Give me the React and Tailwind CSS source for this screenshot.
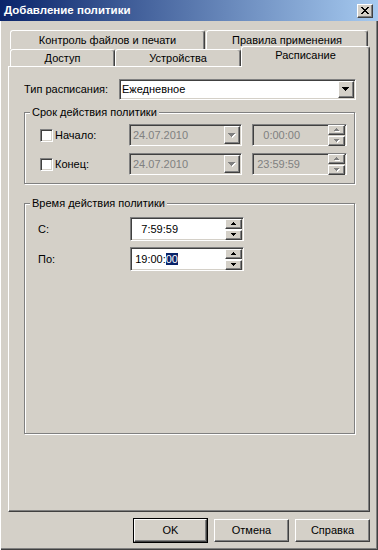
import React from "react";

const raised =
  "bg-[#d4d0c8] border border-t-white border-l-white border-r-[#404040] border-b-[#404040] shadow-[inset_-1px_-1px_0_#808080]";
const sunken =
  "border border-t-[#808080] border-l-[#808080] border-r-white border-b-white shadow-[inset_1px_1px_0_#404040,inset_-1px_-1px_0_#d4d0c8]";
const etched =
  "relative border border-[#808080] shadow-[1px_1px_0_#fff,inset_1px_1px_0_#fff]";

function ArrowDown({ disabled }) {
  const d = "M0 0h7v1H0zM1 1h5v1H1zM2 2h3v1H2zM3 3h1v1H3z";
  return (
    <svg width="8" height="5" viewBox="0 0 8 5" shapeRendering="crispEdges">
      {disabled && <path d={d} fill="#fff" transform="translate(1 1)" />}
      <path d={d} fill={disabled ? "#808080" : "#000"} />
    </svg>
  );
}

function SpinArrow({ up, disabled }) {
  const d = up ? "M2 0h1v1H2zM1 1h3v1H1zM0 2h5v1H0z" : "M0 0h5v1H0zM1 1h3v1H1zM2 2h1v1H2z";
  return (
    <svg width="6" height="4" viewBox="0 0 6 4" shapeRendering="crispEdges">
      {disabled && <path d={d} fill="#fff" transform="translate(1 1)" />}
      <path d={d} fill={disabled ? "#808080" : "#000"} />
    </svg>
  );
}

function Tab({ width, children, selected }) {
  return (
    <div
      className={`${width} ${
        selected ? "h-[21px] relative top-[1px] z-10 pb-[3px]" : "h-full"
      } flex items-center justify-center bg-[#d4d0c8] border-t border-l border-r border-t-white border-l-white border-r-[#404040] shadow-[inset_-1px_0_0_#808080] rounded-t-[3px]`}
    >
      {children}
    </div>
  );
}

function Spinner({ disabled, top }) {
  return (
    <div className={`flex flex-col gap-[1px] mr-[1px] ${top}`}>
      <div className={`${raised} w-[17px] h-[10px] flex items-center justify-center`}>
        <SpinArrow up disabled={disabled} />
      </div>
      <div className={`${raised} w-[17px] h-[10px] flex items-center justify-center`}>
        <SpinArrow disabled={disabled} />
      </div>
    </div>
  );
}

function DateRow({ label, date, time }) {
  return (
    <div className="flex items-center h-[22px]">
      <div className="w-[89px] flex items-center">
        <div className={`${sunken} w-[13px] h-[13px] bg-white`} />
        <span className="ml-[2px]">{label}</span>
      </div>
      <div
        className={`${sunken} w-[113px] h-[22px] bg-[#d4d0c8] flex items-center justify-between pl-[3px] text-[#808080]`}
      >
        <span>{date}</span>
        <div className={`${raised} w-[16px] h-[18px] mr-[1px] flex items-center justify-center`}>
          <ArrowDown disabled />
        </div>
      </div>
      <div
        className={`${sunken} ml-[10px] w-[95px] h-[22px] bg-[#d4d0c8] flex items-center justify-between text-[#808080]`}
      >
        <span className="w-[47px] text-right">{time}</span>
        <Spinner disabled top="" />
      </div>
    </div>
  );
}

function TimeRow({ label, children }) {
  return (
    <div className="flex items-center h-[24px]">
      <span className="w-[92px]">{label}</span>
      <div className={`${sunken} w-[114px] h-[24px] bg-white flex items-center justify-between`}>
        <span className="w-[47px] text-right">{children}</span>
        <Spinner top="self-start pt-[1px]" />
      </div>
    </div>
  );
}

export default function App() {
  return (
    <div className="w-[378px] h-[550px] bg-[#d4d0c8] flex flex-col overflow-hidden text-black text-[11px] leading-[13px] font-['Liberation_Sans',Arial,sans-serif] shadow-[inset_1px_0_0_#fff,inset_-1px_-1px_0_#404040,inset_-2px_-2px_0_#808080]">
      <div className="h-[21px] shrink-0 flex items-center justify-between pl-[4px] pr-[5px] bg-[linear-gradient(to_right,#0a246a,#a6caf0)]">
        <span className="text-white font-bold text-[11.5px]">Добавление политики</span>
        <div className={`${raised} w-[16px] h-[14px] flex items-center justify-center`}>
          <svg width="8" height="7" viewBox="0 0 8 7" shapeRendering="crispEdges">
            <path
              d="M0 0h2v1H0zM6 0h2v1H6zM1 1h2v1H1zM5 1h2v1H5zM2 2h4v1H2zM3 3h2v1H3zM2 4h4v1H2zM1 5h2v1H1zM5 5h2v1H5zM0 6h2v1H0zM6 6h2v1H6z"
              fill="#000"
            />
          </svg>
        </div>
      </div>

      <div className="flex-1 flex flex-col px-[8px] pt-[9px]">
        <div className="flex h-[19px] pl-[2px] gap-[1px]">
          <Tab width="w-[195px]">Контроль файлов и печати</Tab>
          <Tab width="w-[162px]">Правила применения</Tab>
        </div>
        <div className="flex items-end h-[17px] pl-[2px]">
          <Tab width="w-[105px]">Доступ</Tab>
          <Tab width="w-[126px]">Устройства</Tab>
          <Tab width="w-[129px]" selected>
            Расписание
          </Tab>
        </div>

        <div className="w-[362px] h-[446px] flex flex-col pt-[12px] pl-[15px] border border-t-white border-l-white border-r-[#404040] border-b-[#404040] shadow-[inset_-1px_-1px_0_#808080]">
          <div className="flex items-center h-[21px]">
            <span className="w-[95px]">Тип расписания:</span>
            <div className={`${sunken} w-[237px] h-[21px] bg-white flex items-center justify-between pl-[2px]`}>
              <span>Ежедневное</span>
              <div className={`${raised} w-[16px] h-[17px] mr-[1px] flex items-center justify-center`}>
                <ArrowDown />
              </div>
            </div>
          </div>

          <div className={`${etched} mt-[12px] w-[331px] h-[72px] pt-[11px] pl-[15px]`}>
            <span className="absolute left-[5px] -top-[7px] px-[2px] bg-[#d4d0c8]">
              Срок действия политики
            </span>
            <div className="flex flex-col gap-[7px]">
              <DateRow label="Начало:" date="24.07.2010" time="0:00:00" />
              <DateRow label="Конец:" date="24.07.2010" time="23:59:59" />
            </div>
          </div>

          <div className={`${etched} mt-[19px] w-[331px] h-[231px] pt-[13px] pl-[13px]`}>
            <span className="absolute left-[5px] -top-[7px] px-[2px] bg-[#d4d0c8]">
              Время действия политики
            </span>
            <div className="flex flex-col gap-[6px]">
              <TimeRow label="С:">7:59:59</TimeRow>
              <TimeRow label="По:">
                19:00:<span className="bg-[#0a246a] text-white">00</span>
              </TimeRow>
            </div>
          </div>
        </div>

        <div className="mt-[6px] flex justify-end items-center gap-[6px] h-[25px]">
          <div className="w-[75px] h-[25px] border border-black flex">
            <div className={`${raised} flex-1 flex items-center justify-center`}>OK</div>
          </div>
          <div className={`${raised} w-[75px] h-[23px] flex items-center justify-center`}>Отмена</div>
          <div className={`${raised} w-[75px] h-[23px] flex items-center justify-center`}>Справка</div>
        </div>
      </div>
    </div>
  );
}
